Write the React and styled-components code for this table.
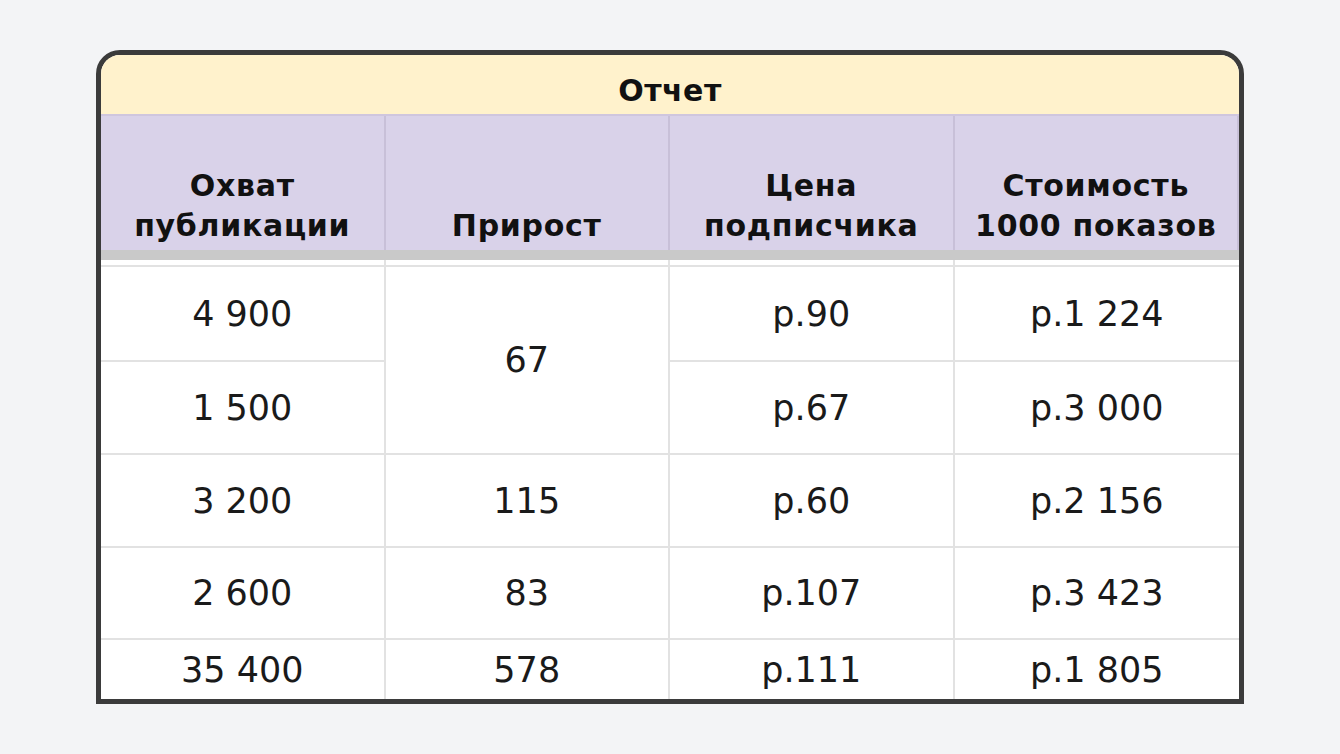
import React from 'react';
import styled, { createGlobalStyle } from 'styled-components';

const GlobalStyle = createGlobalStyle`
  html, body {
    margin: 0;
    padding: 0;
    background: #f3f4f6;
  }
  body {
    font-family: "DejaVu Sans", "Liberation Sans", sans-serif;
    color: #111;
  }
`;

const Page = styled.div`
  width: 1340px;
  height: 754px;
  display: flex;
  justify-content: center;
  padding-top: 50px;
  box-sizing: border-box;
`;

const Card = styled.div`
  width: 1148px;
  box-sizing: border-box;
  border: 5px solid #3b3b3b;
  border-radius: 24px 24px 0 0;
  overflow: hidden;
  background: #fff;
  display: flex;
  flex-direction: column;
  align-self: flex-start;
`;

const Title = styled.div`
  height: 61px;
  flex: none;
  background: #fff2cc;
  border-bottom: 2px solid #cfc6de;
  display: flex;
  align-items: center;
  justify-content: center;
  font-weight: 700;
  font-size: 30px;
  letter-spacing: 0.5px;
  padding-top: 11px;
  box-sizing: border-box;
`;

const Grid = styled.div`
  display: grid;
  grid-template-columns: repeat(4, 1fr);
  grid-template-rows: 134px 10px 7px 95px 93px 93px 92px 59px;
`;

const HeadCell = styled.div`
  background: #d9d2e9;
  border-right: 2px solid #c8c0d8;
  display: flex;
  align-items: flex-end;
  justify-content: center;
  text-align: center;
  font-weight: 700;
  font-size: 30px;
  letter-spacing: 0.7px;
  line-height: 40px;
  padding-bottom: 4px;
  box-sizing: border-box;
  &:last-child { border-right: none; }
`;

const Bar = styled.div`
  grid-column: 1 / -1;
  background: #c9c9c9;
`;

const Gap = styled.div`
  border-right: 2px solid #e2e2e2;
  border-bottom: 2px solid #e2e2e2;
  ${p => p.$last && 'border-right: none;'}
`;

const Cell = styled.div`
  border-right: 2px solid #e2e2e2;
  border-bottom: 2px solid #e2e2e2;
  display: flex;
  align-items: center;
  justify-content: center;
  font-size: 35px;
  color: #1a1a1a;
  box-sizing: border-box;
  ${p => p.$span && `grid-row: span ${p.$span};`}
  ${p => p.$last && 'border-right: none;'}
  ${p => p.$end && 'border-bottom: none;'}
`;

const headers = [
  ['Охват', 'публикации'],
  ['Прирост'],
  ['Цена', 'подписчика'],
  ['Стоимость', '1000 показов'],
];

const rows = [
  ['4 900', { v: '67', span: 2 }, 'р.90', 'р.1 224'],
  ['1 500', null, 'р.67', 'р.3 000'],
  ['3 200', '115', 'р.60', 'р.2 156'],
  ['2 600', '83', 'р.107', 'р.3 423'],
  ['35 400', '578', 'р.111', 'р.1 805'],
];

export default function App() {
  return (
    <Page>
      <GlobalStyle />
      <Card>
        <Title>Отчет</Title>
        <Grid>
          {headers.map((h, i) => (
            <HeadCell key={i}>
              <div>
                {h.map((line, j) => (
                  <div key={j}>{line}</div>
                ))}
              </div>
            </HeadCell>
          ))}
          <Bar />
          {[0, 1, 2, 3].map(i => (
            <Gap key={i} $last={i === 3} />
          ))}
          {rows.map((r, ri) =>
            r.map((c, ci) => {
              if (c === null) return null;
              const last = ci === 3;
              const end = ri === rows.length - 1;
              if (typeof c === 'object') {
                return (
                  <Cell key={ri + '-' + ci} $span={c.span} $last={last}>
                    {c.v}
                  </Cell>
                );
              }
              return (
                <Cell key={ri + '-' + ci} $last={last} $end={end}>
                  {c}
                </Cell>
              );
            })
          )}
        </Grid>
      </Card>
    </Page>
  );
}
